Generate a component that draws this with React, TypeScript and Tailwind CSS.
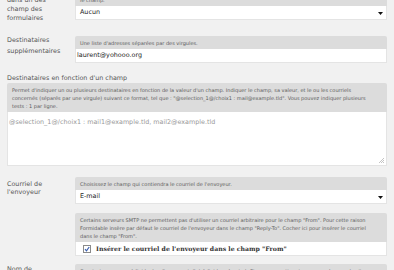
import React from "react";

const Hint = ({ lines }: { lines: string[] }) => (
  <div className="bg-[#dcdcdc] rounded-t-[2px] px-[5px] pt-[3px] pb-[2px] text-[5px] leading-[8px] text-[#5a5a5a]">
    {lines.map((l, i) => (
      <div key={i} className="whitespace-nowrap">
        {l}
      </div>
    ))}
  </div>
);

const Arrow = () => (
  <svg width="5" height="3" viewBox="0 0 5 3" className="absolute right-[3px] top-[6px]">
    <path d="M0 0H5L2.5 3Z" fill="#111" />
  </svg>
);

const SelectBox = ({ value }: { value: string }) => (
  <div className="relative h-[14px] bg-white border border-t-0 border-[#e4e4e4] pl-[4px] text-[6.4px] leading-[13px] text-[#222]">
    {value}
    <Arrow />
  </div>
);

const App = () => {
  return (
    <div
      className="min-h-screen bg-[#f1f1f1] overflow-hidden"
      style={{ fontFamily: '"DejaVu Sans", Verdana, sans-serif' }}
    >
      <div className="-mt-[15px] px-[7px] text-[6.4px] leading-[9px] text-[#555]">
        {/* champ destinataire */}
        <div className="flex">
          <div className="w-[68px] shrink-0 pt-[2px]">
            Courriel contenu
            <br />
            dans un des
            <br />
            champ des
            <br />
            formulaires
          </div>
          <div className="flex-1">
            <Hint
              lines={[
                "Sélectionnez le champ qui contient le courriel du destinataire, si vous souhaitez l'envoyer au courriel indiqué dans",
                "le champ.",
              ]}
            />
            <SelectBox value="Aucun" />
          </div>
        </div>

        {/* destinataires supplementaires */}
        <div className="flex mt-[13px]">
          <div className="w-[68px] shrink-0 -mt-[1px] leading-[11px]">
            Destinataires
            <br />
            supplémentaires
          </div>
          <div className="flex-1">
            <Hint lines={["Une liste d'adresses séparées par des virgules."]} />
            <div className="h-[14px] bg-white border border-t-0 border-[#e4e4e4] pl-[1px] text-[6.4px] leading-[13px] text-[#222]">
              laurent@yohooo.org
            </div>
          </div>
        </div>

        {/* en fonction d'un champ */}
        <div className="mt-[10px]">
          <div className="leading-[10px]">Destinataires en fonction d'un champ</div>
          <Hint
            lines={[
              "Permet d'indiquer un ou plusieurs destinataires en fonction de la valeur d'un champ. Indiquer le champ, sa valeur, et le ou les courriels",
              'concernés (séparés par une virgule) suivant ce format, tel que : "@selection_1@/choix1 : mail@example.tld". Vous pouvez indiquer plusieurs',
              "tests : 1 par ligne.",
            ]}
          />
          <div className="relative h-[54px] bg-white border border-t-0 border-[#e4e4e4] pl-[1px] pt-[6px] text-[6.4px] leading-[8px] text-[#999]">
            @selection_1@/choix1 : mail1@example.tld, mail2@example.tld
            <svg width="6" height="6" viewBox="0 0 6 6" className="absolute right-[2px] bottom-[2px]">
              <path d="M6 1L1 6M6 3L3 6M6 5L5 6" stroke="#b5b5b5" strokeWidth="0.8" />
            </svg>
          </div>
        </div>

        {/* courriel de l'envoyeur */}
        <div className="flex mt-[11px]">
          <div className="w-[68px] shrink-0 pt-[3px] leading-[8px]">
            Courriel de
            <br />
            l'envoyeur
          </div>
          <div className="flex-1">
            <Hint lines={["Choisissez le champ qui contiendra le courriel de l'envoyeur."]} />
            <SelectBox value="E-mail" />
          </div>
        </div>

        {/* from */}
        <div className="flex mt-[9px]">
          <div className="w-[68px] shrink-0" />
          <div className="flex-1">
            <Hint
              lines={[
                'Certains serveurs SMTP ne permettent pas d\'utiliser un courriel arbitraire pour le champ "From". Pour cette raison',
                'Formidable insère par défaut le courriel de l\'envoyeur dans le champ "Reply-To". Cocher ici pour insérer le courriel',
                'dans le champ "From".',
              ]}
            />
            <div className="h-[14px] bg-white border border-t-0 border-[#e4e4e4] flex items-center pl-[7px] gap-[5px]">
              <div className="w-[8px] h-[8px] border border-[#8a8a8a] bg-white flex items-center justify-center">
                <svg width="6" height="6" viewBox="0 0 6 6">
                  <path d="M1 3.2L2.5 4.8L5.2 1" stroke="#3a5fb0" strokeWidth="1.2" fill="none" />
                </svg>
              </div>
              <span
                className="text-[6.2px] font-bold text-[#333] whitespace-nowrap"
                style={{ fontFamily: '"DejaVu Serif", serif' }}
              >
                Insérer le courriel de l'envoyeur dans le champ "From"
              </span>
            </div>
          </div>
        </div>

        {/* nom */}
        <div className="flex mt-[8px]">
          <div className="w-[68px] shrink-0 pt-[1px]">
            Nom de
            <br />
            l'envoyeur
          </div>
          <div className="flex-1">
            <Hint
              lines={[
                "Construisez ce nom à l'aide des @raccourcis@ (cf. l'aide mémoire). Si vous ne mettez rien, ce sera le nom du site.",
              ]}
            />
            <SelectBox value="" />
          </div>
        </div>
      </div>
    </div>
  );
};

export default App;
